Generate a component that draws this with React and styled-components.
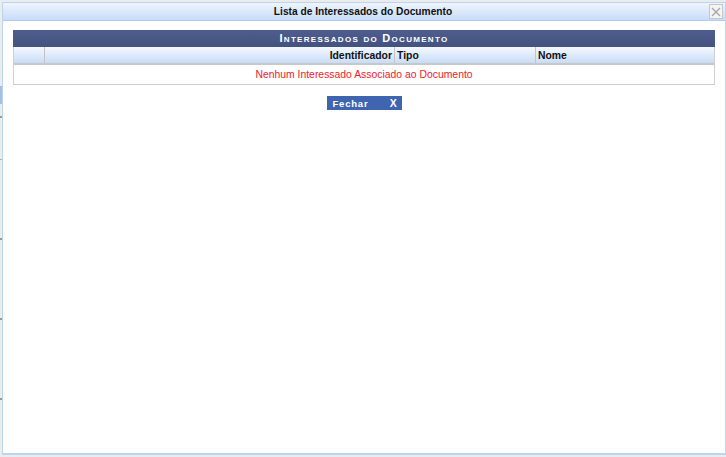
import React from "react";
import styled, { createGlobalStyle } from "styled-components";

const Global = createGlobalStyle`
  html, body { margin: 0; padding: 0; }
  body {
    background: #ececec;
    font-family: "Liberation Sans", Arial, sans-serif;
    font-size: 10.4px;
    width: 726px;
    height: 457px;
    overflow: hidden;
  }
`;

const Page = styled.div`
  width: 726px;
  height: 457px;
  padding: 2px 0 2px 2px;
  box-sizing: border-box;
  background-color: #ececec;
  background-image:
    linear-gradient(#a9bde0, #a9bde0),
    linear-gradient(#9a9a9a, #9a9a9a),
    linear-gradient(#b0b0b0, #b0b0b0),
    linear-gradient(#9a9a9a, #9a9a9a),
    linear-gradient(#9a9a9a, #9a9a9a),
    linear-gradient(#9a9a9a, #9a9a9a);
  background-size: 2px 18px, 2px 2px, 2px 1px, 2px 2px, 2px 2px, 2px 2px;
  background-position: 0 86px, 0 116px, 0 159px, 0 238px, 0 318px, 0 398px;
  background-repeat: no-repeat;
`;

const Dialog = styled.div`
  height: 100%;
  box-sizing: border-box;
  background: #fff;
  border: 1px solid #bcd4f4;
  border-width: 1px 1px 2px 1px;
  display: flex;
  flex-direction: column;
`;

const TitleBar = styled.div`
  height: 17px;
  background: linear-gradient(#eef5ff, #c8dcf8);
  border-bottom: 1px solid #b3cdef;
  display: grid;
  grid-template-columns: 1fr auto 1fr;
  align-items: center;
  padding-right: 2px;
  font-weight: bold;
  font-size: 10.2px;
  color: #111;
`;

const Title = styled.span`
  grid-column: 2;
`;

const Close = styled.div`
  grid-column: 3;
  justify-self: end;
  width: 12px;
  height: 13px;
  border: 1px solid #c6c6c6;
  background: #f4f4f4;
  display: flex;
  align-items: center;
  justify-content: center;
`;

const Content = styled.div`
  padding: 9px 10px 0 10px;
  display: flex;
  flex-direction: column;
  align-items: center;
`;

const Table = styled.table`
  width: 702px;
  border-collapse: collapse;
  border: 1px solid #cfcfcf;
  border-top: none;
  font-size: 10.4px;
`;

const Caption = styled.caption`
  height: 17px;
  background: linear-gradient(#4e5d8f, #44527f);
  color: #fff;
  font-weight: bold;
  font-variant: small-caps;
  font-size: 11px;
  letter-spacing: 1.3px;
  line-height: 17px;
  text-align: center;
`;

const Th = styled.th`
  height: 17px;
  padding: 0 2px;
  background: linear-gradient(#f4f8fe, #c8dcf7);
  border-left: 1px solid #c4c4c4;
  border-bottom: 2px solid #c8c8c8;
  text-align: ${(p) => p.$align || "left"};
  font-weight: bold;
  color: #111;
  width: ${(p) => p.$w}px;
  box-sizing: border-box;
  &:first-child { border-left: none; }
`;

const Empty = styled.td`
  height: 19px;
  color: #f2182b;
  text-align: center;
  padding: 0;
`;

const Button = styled.button`
  margin-top: 11px;
  width: 75px;
  height: 14px;
  padding: 0 4px 0 6px;
  border: none;
  background: #3f65b0;
  color: #fff;
  font-family: "Liberation Sans", Arial, sans-serif;
  font-weight: bold;
  font-size: 9.5px;
  letter-spacing: 0.8px;
  display: flex;
  justify-content: space-between;
  align-items: center;
`;

const ButtonX = styled.span`
  font-size: 10.5px;
`;

export default function App() {
  return (
    <>
      <Global />
      <Page>
        <Dialog>
          <TitleBar>
            <Title>Lista de Interessados do Documento</Title>
            <Close>
              <svg width="10" height="10" viewBox="0 0 10 10">
                <path d="M1 1L9 9M9 1L1 9" stroke="#a8a8a8" strokeWidth="1.4" />
              </svg>
            </Close>
          </TitleBar>
          <Content>
            <Table>
              <Caption>Interessados do Documento</Caption>
              <thead>
                <tr>
                  <Th $w={31} />
                  <Th $w={350} $align="right">Identificador</Th>
                  <Th $w={141}>Tipo</Th>
                  <Th>Nome</Th>
                </tr>
              </thead>
              <tbody>
                <tr>
                  <Empty colSpan={4}>Nenhum Interessado Associado ao Documento</Empty>
                </tr>
              </tbody>
            </Table>
            <Button>
              <span>Fechar</span>
              <ButtonX>X</ButtonX>
            </Button>
          </Content>
        </Dialog>
      </Page>
    </>
  );
}
